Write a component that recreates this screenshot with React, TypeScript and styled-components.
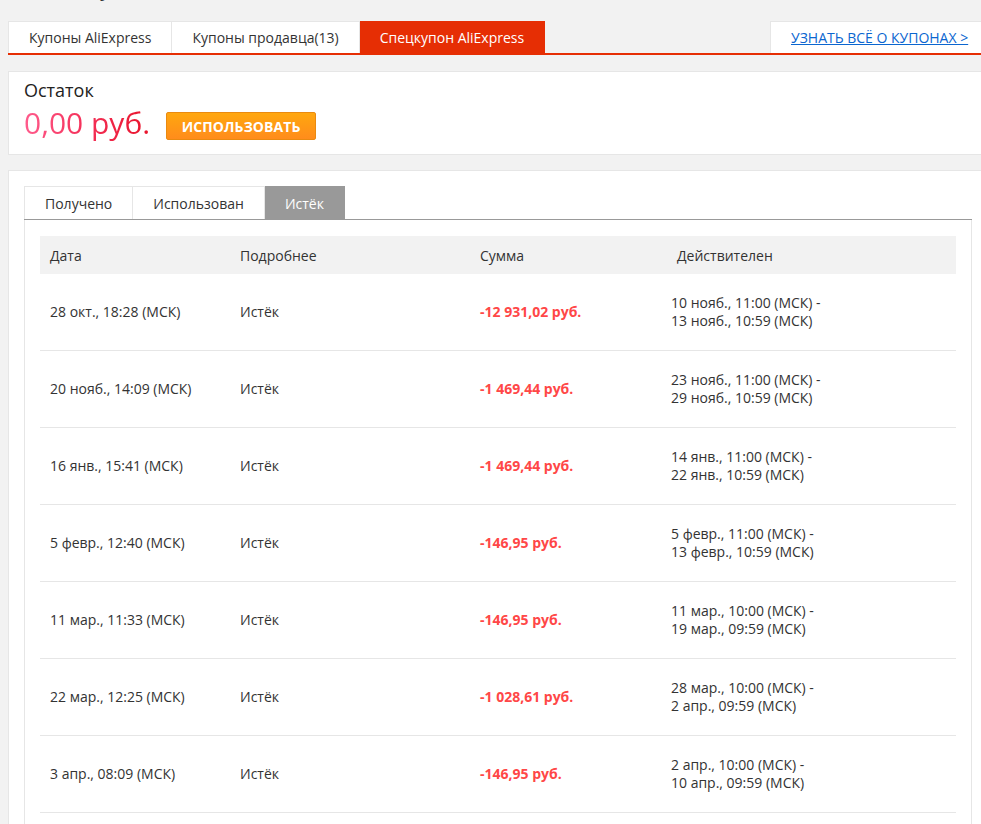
import React from 'react';
import styled, { createGlobalStyle } from 'styled-components';

const GlobalStyle = createGlobalStyle`
  html, body {
    margin: 0;
    padding: 0;
    overflow: hidden;
    background: #f2f2f2;
  }
  body {
    font-family: 'Open Sans', 'Noto Sans', Arial, sans-serif;
    color: #333;
  }
  * {
    box-sizing: border-box;
  }
`;

const Page = styled.div`
  width: 980px;
  margin-left: 8px;
`;

const TitleClip = styled.div`
  height: 21px;
  overflow: hidden;
`;

const Title = styled.h1`
  margin: -21px 0 0;
  padding-left: 34px;
  font-size: 20px;
  line-height: 20px;
  font-weight: 400;
  color: #333;
`;

const TopTabs = styled.div`
  display: flex;
  align-items: stretch;
  height: 34px;
  border-bottom: 2px solid #e62e04;
`;

const TopTab = styled.div<{ $active?: boolean }>`
  display: flex;
  align-items: center;
  padding: 0 20px;
  font-size: 14px;
  background: ${(p) => (p.$active ? '#e62e04' : '#fff')};
  color: ${(p) => (p.$active ? '#fff' : '#333')};
  border: 1px solid ${(p) => (p.$active ? '#e62e04' : '#e6e6e6')};
  border-bottom: none;
  & + & {
    border-left: none;
  }
`;

const InfoLink = styled.a`
  margin-left: auto;
  width: 218px;
  display: flex;
  align-items: center;
  padding-left: 20px;
  background: #fff;
  border: 1px solid #e6e6e6;
  border-bottom: none;
  font-size: 14px;
  color: #0b66d0;
  text-decoration: underline;
  cursor: pointer;
`;

const Panel = styled.div`
  background: #fff;
  border: 1px solid #e6e6e6;
`;

const BalancePanel = styled(Panel)`
  margin-top: 16px;
  height: 84px;
  padding: 6px 15px 0;
`;

const BalanceLabel = styled.div`
  font-size: 18px;
  line-height: 24px;
  color: #222;
`;

const BalanceRow = styled.div`
  display: flex;
  align-items: center;
  gap: 16px;
  margin-top: 1px;
`;

const BalanceAmount = styled.span`
  font-size: 30px;
  line-height: 40px;
  background: linear-gradient(90deg, #ff5c8d 0%, #f5335c 45%, #e8132a 100%);
  -webkit-background-clip: text;
  background-clip: text;
  color: transparent;
`;

const UseButton = styled.button`
  width: 150px;
  height: 28px;
  margin-top: 6px;
  border: 1px solid #ea8a10;
  border-radius: 2px;
  background: linear-gradient(180deg, #ffa70f 0%, #ff8c1c 100%);
  color: #fff;
  font-family: inherit;
  font-size: 14px;
  font-weight: 700;
  letter-spacing: 0.1px;
  cursor: pointer;
`;

const MainPanel = styled(Panel)`
  margin-top: 15px;
  padding: 15px 15px 0;
`;

const SubTabs = styled.div`
  display: flex;
  width: 948px;
  height: 34px;
  border-bottom: 1px solid #999;
`;

const SubTab = styled.div<{ $active?: boolean }>`
  display: flex;
  align-items: center;
  padding: 0 20px;
  font-size: 14px;
  background: ${(p) => (p.$active ? '#999' : '#fff')};
  color: ${(p) => (p.$active ? '#fff' : '#333')};
  border: 1px solid ${(p) => (p.$active ? '#999' : '#e6e6e6')};
  border-bottom: none;
  & + & {
    border-left: none;
  }
`;

const TabBody = styled.div`
  width: 948px;
  padding: 16px 15px 60px;
  border-left: 1px solid #e6e6e6;
  border-right: 1px solid #e6e6e6;
`;

const Grid = styled.div`
  display: grid;
  grid-template-columns: 190px 240px 197px 1fr;
`;

const HeadRow = styled(Grid)`
  height: 38px;
  background: #f2f2f2;
  align-items: center;
`;

const HeadCell = styled.div`
  padding-left: 10px;
  font-size: 14px;
  color: #333;
`;

const Row = styled(Grid)`
  height: 77px;
  align-items: center;
  border-bottom: 1px solid #e6e6e6;
`;

const Cell = styled.div<{ $indent?: number }>`
  padding-left: ${(p) => p.$indent ?? 10}px;
  font-size: 14px;
  line-height: 18px;
  color: #333;
`;

const Amount = styled(Cell)`
  font-weight: 700;
  color: #ff4747;
`;

const rows = [
  { date: '28 окт., 18:28 (МСК)', sum: '-12 931,02 руб.', from: '10 нояб., 11:00 (МСК) -', to: '13 нояб., 10:59 (МСК)' },
  { date: '20 нояб., 14:09 (МСК)', sum: '-1 469,44 руб.', from: '23 нояб., 11:00 (МСК) -', to: '29 нояб., 10:59 (МСК)' },
  { date: '16 янв., 15:41 (МСК)', sum: '-1 469,44 руб.', from: '14 янв., 11:00 (МСК) -', to: '22 янв., 10:59 (МСК)' },
  { date: '5 февр., 12:40 (МСК)', sum: '-146,95 руб.', from: '5 февр., 11:00 (МСК) -', to: '13 февр., 10:59 (МСК)' },
  { date: '11 мар., 11:33 (МСК)', sum: '-146,95 руб.', from: '11 мар., 10:00 (МСК) -', to: '19 мар., 09:59 (МСК)' },
  { date: '22 мар., 12:25 (МСК)', sum: '-1 028,61 руб.', from: '28 мар., 10:00 (МСК) -', to: '2 апр., 09:59 (МСК)' },
  { date: '3 апр., 08:09 (МСК)', sum: '-146,95 руб.', from: '2 апр., 10:00 (МСК) -', to: '10 апр., 09:59 (МСК)' },
];

export default function App() {
  return (
    <>
      <GlobalStyle />
      <Page>
        <TitleClip>
          <Title>Мои купоны</Title>
        </TitleClip>

        <TopTabs>
          <TopTab>Купоны AliExpress</TopTab>
          <TopTab>Купоны продавца(13)</TopTab>
          <TopTab $active>Спецкупон AliExpress</TopTab>
          <InfoLink>УЗНАТЬ ВСЁ О КУПОНАХ &gt;</InfoLink>
        </TopTabs>

        <BalancePanel>
          <BalanceLabel>Остаток</BalanceLabel>
          <BalanceRow>
            <BalanceAmount>0,00 руб.</BalanceAmount>
            <UseButton>ИСПОЛЬЗОВАТЬ</UseButton>
          </BalanceRow>
        </BalancePanel>

        <MainPanel>
          <SubTabs>
            <SubTab>Получено</SubTab>
            <SubTab>Использован</SubTab>
            <SubTab $active>Истёк</SubTab>
          </SubTabs>
          <TabBody>
            <HeadRow>
              <HeadCell>Дата</HeadCell>
              <HeadCell>Подробнее</HeadCell>
              <HeadCell>Сумма</HeadCell>
              <HeadCell>Действителен</HeadCell>
            </HeadRow>
            {rows.map((r) => (
              <Row key={r.date}>
                <Cell>{r.date}</Cell>
                <Cell>Истёк</Cell>
                <Amount>{r.sum}</Amount>
                <Cell $indent={4}>
                  {r.from}
                  <br />
                  {r.to}
                </Cell>
              </Row>
            ))}
          </TabBody>
        </MainPanel>
      </Page>
    </>
  );
}
